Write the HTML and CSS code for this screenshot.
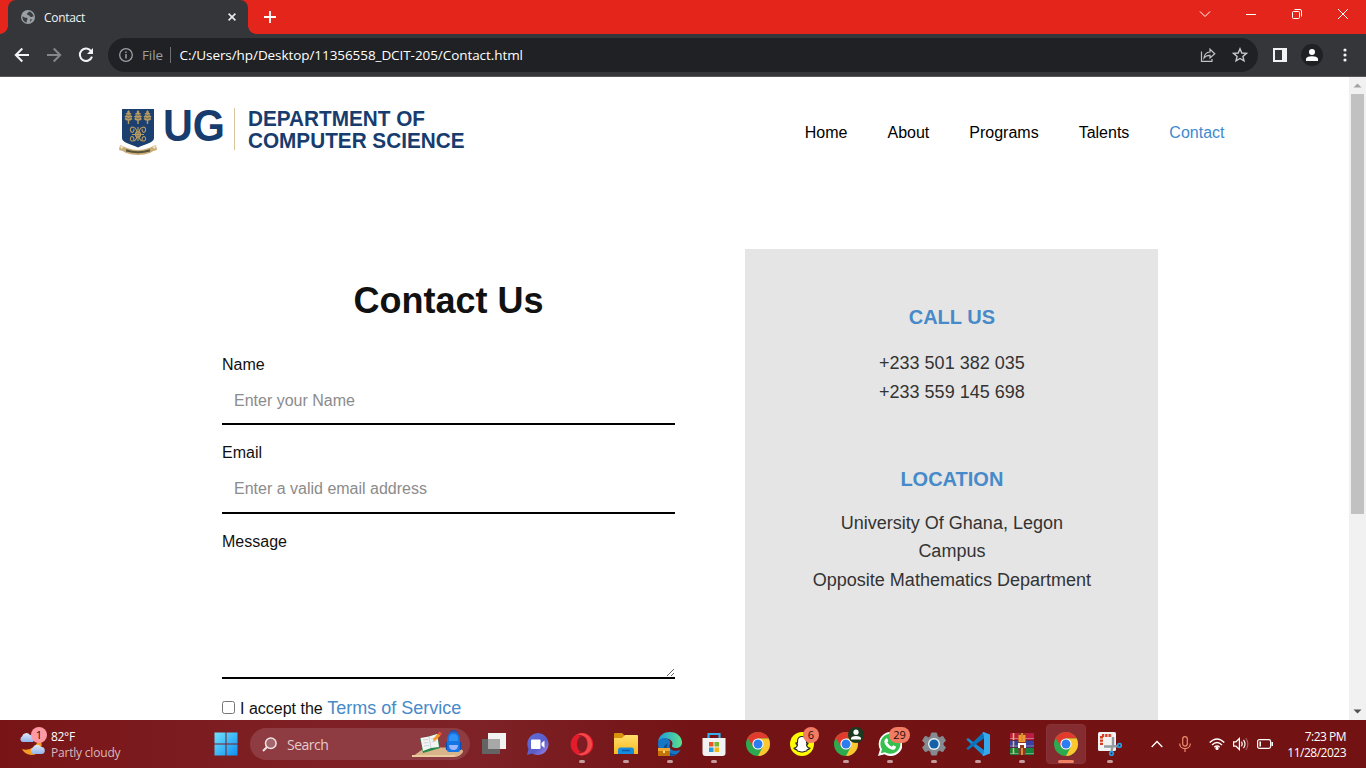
FILE: index.html
```html
<!DOCTYPE html>
<html lang="en">
<head>
<meta charset="utf-8">
<title>Contact</title>
<link rel="stylesheet" href="styles.css">
</head>
<body>
<svg width="0" height="0" class="defs" aria-hidden="true">
  <defs>
    <linearGradient id="gWin" x1="0" y1="0" x2="1" y2="1"><stop offset="0" stop-color="#6fe3ff"/><stop offset="1" stop-color="#0f8ef0"/></linearGradient>
    <linearGradient id="gFolder" x1="0" y1="0" x2="0" y2="1"><stop offset="0" stop-color="#ffdf6b"/><stop offset="1" stop-color="#f9b91f"/></linearGradient>
    <linearGradient id="gEdge" x1="0" y1="0" x2="1" y2="0"><stop offset="0" stop-color="#1a9be0"/><stop offset="1" stop-color="#5de08a"/></linearGradient>
    <linearGradient id="gChat" x1="0" y1="0" x2="1" y2="1"><stop offset="0" stop-color="#5f70d8"/><stop offset=".6" stop-color="#5b5bc9"/><stop offset="1" stop-color="#a98be8"/></linearGradient>
    <linearGradient id="gCloud" x1="0" y1="0" x2="0" y2="1"><stop offset="0" stop-color="#dfeafa"/><stop offset="1" stop-color="#93b3ea"/></linearGradient>
    <symbol id="chrome" viewBox="0 0 24 24">
      <circle cx="12" cy="12" r="12" fill="#2da94f"/>
      <path d="M12 12 1.6 6A12 12 0 0 1 22.4 6L22.4 6.6H12z" fill="#e23b2e"/>
      <path d="M12 6.6H22.7A12 12 0 0 1 12 24L16.8 14.7z" fill="#fdc72f"/>
      <path d="M1.6 6 7.2 14.7 12 6.6z" fill="#e23b2e"/>
      <circle cx="12" cy="12" r="5.6" fill="#fff"/><circle cx="12" cy="12" r="4.5" fill="#2d7df0"/>
    </symbol>
    <symbol id="tree" viewBox="0 0 8 14"><path d="M4 0 5.500 2 5 2.800 7 3.500 6 5.300 8 6.200 6.800 8 8 9 6 10.500 4.700 10.500V14H3.300V10.500L2 10.500 0 9 1.200 8 0 6.200 2 5.300 1 3.500 3 2.800 2.500 2z" fill="#b99b5d"/><path d="M2 4.500 4 5.500 6 4.500M1.500 7.500 4 8.500 6.500 7.500" fill="none" stroke="#1b3f6e" stroke-width=".6"/></symbol>
  </defs>
</svg>

<div class="tabbar">
  <div class="tab">
    <svg class="globe" width="14" height="14" viewBox="0 0 14 14"><circle cx="7" cy="7" r="7" fill="#9aa0a6"/><path d="M1.5 6.2C3 6.5 3.5 7.8 5.2 7.8S6.8 9 6 10 6.2 11.5 5.7 12.6C3 12 1.2 9.5 1.5 6.2zM8 1.5C7.6 2.7 6.2 2.6 6 4S8 4.7 8.5 5.8 10 7.3 11.2 6.8 12.6 7 12.6 6.5C12.3 3.8 10.3 1.9 8 1.5zM9 9.6 11.2 9.3 9.2 12z" fill="#3b3c40"/></svg>
    <span class="tab-title">Contact</span>
    <svg class="tab-close" width="8" height="8" viewBox="0 0 8 8"><path d="M.6.6 7.4 7.4M7.4.6.6 7.4" stroke="#e8eaed" stroke-width="1.6"/></svg>
  </div>
  <svg class="newtab" width="12" height="12" viewBox="0 0 12 12"><path d="M6 0V12M0 6H12" stroke="#fff" stroke-width="1.8"/></svg>
  <div class="window-controls">
    <svg width="12" height="12" viewBox="0 0 12 12"><path d="M1 3.5 6 8.5 11 3.5" fill="none" stroke="#fff"/></svg>
    <svg width="12" height="12" viewBox="0 0 12 12"><path d="M1 6.5H11" stroke="#fff"/></svg>
    <svg width="12" height="12" viewBox="0 0 12 12"><rect x="1.5" y="3.5" width="7" height="7" rx="1" fill="none" stroke="#fff"/><path d="M3.5 1.5H9Q10.5 1.5 10.5 3V8.5" fill="none" stroke="#fff"/></svg>
    <svg width="12" height="12" viewBox="0 0 12 12"><path d="M1 1 11 11M11 1 1 11" stroke="#fff"/></svg>
  </div>
</div>

<div class="toolbar">
  <svg width="16" height="16" viewBox="0 0 16 16"><path d="M15 8H2M8.3 1.5 1.8 8 8.3 14.5" fill="none" stroke="#f1f3f4" stroke-width="2"/></svg>
  <svg width="16" height="16" viewBox="0 0 16 16"><path d="M1 8H14M7.7 1.5 14.2 8 7.7 14.5" fill="none" stroke="#85868a" stroke-width="2"/></svg>
  <svg width="16" height="16" viewBox="0 0 16 16"><path d="M13.2 4.2A6.2 6.2 0 1 0 14 9.6" fill="none" stroke="#f1f3f4" stroke-width="2"/><path d="M15 1V7H9z" fill="#f1f3f4"/></svg>
  <div class="omnibox">
    <svg width="14" height="14" viewBox="0 0 14 14"><circle cx="7" cy="7" r="6.3" fill="none" stroke="#9aa0a6" stroke-width="1.3"/><path d="M7 6V10.4M7 3.4V5" stroke="#9aa0a6" stroke-width="1.5"/></svg>
    <span class="scheme">File</span>
    <span class="divider"></span>
    <span class="url">C:/Users/hp/Desktop/11356558_DCIT-205/Contact.html</span>
    <svg class="share" width="16" height="16" viewBox="0 0 16 16"><path d="M1.5 4.5V14.3H12V12" fill="none" stroke="#bfc1c5" stroke-width="1.2"/><path d="M4 11C4.3 7.5 6.5 5.3 10 5V2.2L14.8 6.8 10 11V8.3C7.5 8.2 5.5 9 4 11z" fill="none" stroke="#bfc1c5" stroke-width="1.2"/></svg>
    <svg class="star" width="16" height="16" viewBox="0 0 16 16"><path d="M8 1.8 9.8 6 14.4 6.4 10.9 9.4 12 13.9 8 11.5 4 13.9 5.1 9.4 1.6 6.4 6.2 6z" fill="none" stroke="#c6c8cc" stroke-width="1.4"/></svg>
  </div>
  <svg class="panel" width="14" height="14" viewBox="0 0 14 14"><path d="M0 0H14V14H0zM2 2V12H9V2z" fill="#f1f3f4" fill-rule="evenodd"/></svg>
  <svg class="profile" width="22" height="22" viewBox="0 0 22 22"><circle cx="11" cy="11" r="11" fill="#202124"/><circle cx="11" cy="8" r="3" fill="#fff"/><path d="M5 17V15C5 12.8 9 12.2 11 12.2S17 12.8 17 15V17z" fill="#fff"/></svg>
  <svg class="dots" width="4" height="14" viewBox="0 0 4 14"><g fill="#f1f3f4"><circle cx="2" cy="2" r="1.6"/><circle cx="2" cy="7" r="1.6"/><circle cx="2" cy="12" r="1.6"/></g></svg>
</div>

<div class="viewport">
  <div class="page">
    <header class="site-header">
      <svg class="logo" width="356" height="64" viewBox="0 -7 356 64">
        <path d="M3 2H35V31C35 36 26 37 19 40.5 12 37 3 36 3 31z" fill="#1b3f6e"/>
        <use href="#tree" x="5" y="3" width="9" height="14"/><use href="#tree" x="14.5" y="3" width="9" height="14"/><use href="#tree" x="24" y="3" width="9" height="14"/>
        <g fill="none" stroke="#b99b5d" stroke-width="1.1"><path d="M19 20V34M13 27.5H25"/><circle cx="19" cy="27.5" r="2.6"/><path d="M18 27C18 18 10 19 11.500 23.500S16 23 14.500 22M20 27C20 18 28 19 26.500 23.500S22 23 23.500 22M18 28C18 36 10 35 11.500 31S16 32 14.500 33M20 28C20 36 28 35 26.500 31S22 32 23.500 33"/></g>
        <path d="M1 38 8 41Q19 45 30 41L37 38 38 43Q34 43.500 31 46 19 50 7 46 4 43.500 0 43z" fill="#c8ac74"/><path d="M7 42.300Q19 46 31 42.300V44.500Q19 48 7 44.500z" fill="#57533f"/>
        <path d="M1 38.500 5 40 2 42zM37 38.500 33 40 36 42z" fill="#f1e4c8"/>
        <text x="44" y="33.500" class="logo-ug" textLength="62" lengthAdjust="spacingAndGlyphs">UG</text>
        <path d="M115.500 1V43" stroke="#d9c49c"/>
        <text x="129" y="18.500" class="logo-name" textLength="177" lengthAdjust="spacingAndGlyphs">DEPARTMENT OF</text>
        <text x="129" y="41" class="logo-name" textLength="216.500" lengthAdjust="spacingAndGlyphs">COMPUTER SCIENCE</text>
      </svg>
      <nav class="site-nav"><a>Home</a><a>About</a><a>Programs</a><a>Talents</a><a class="active">Contact</a></nav>
    </header>
    <main class="contact">
      <form class="contact-form">
        <h1>Contact Us</h1>
        <label for="name">Name</label>
        <input class="field name" id="name" type="text" placeholder="Enter your Name">
        <label for="email">Email</label>
        <input class="field email" id="email" type="email" placeholder="Enter a valid email address">
        <label for="message">Message</label>
        <textarea class="field" id="message"></textarea>
        <div class="terms"><input type="checkbox" id="terms"><span>I accept the <a>Terms of Service</a></span></div>
      </form>
      <aside class="info">
        <h2>CALL US</h2>
        <p>+233 501 382 035<br>+233 559 145 698</p>
        <h2 class="location">LOCATION</h2>
        <p>University Of Ghana, Legon<br>Campus<br>Opposite Mathematics Department</p>
      </aside>
    </main>
  </div>
  <div class="scrollbar">
    <svg width="17" height="17" viewBox="0 0 17 17"><path d="M8.500 6.500 12.500 10.500H4.500z" fill="#a3a3a3"/></svg>
    <div class="thumb"></div>
    <svg class="down" width="17" height="17" viewBox="0 0 17 17"><path d="M8.500 10.500 12.500 6.500H4.500z" fill="#505050"/></svg>
  </div>
</div>

<footer class="taskbar">
  <div class="weather">
    <div class="weather-icon">
      <svg width="26" height="28" viewBox="0 0 26 28"><path d="M20 10Q24 14 22 20 19 26 12 26 5 25 3 20 8 22 13 19T20 10z" fill="#f59a23"/><path d="M3.500 13A3 3 0 0 1 3 7.500 4.500 4.500 0 0 1 11 6 4 4 0 0 1 14 13z" fill="url(#gCloud)"/><path d="M14 25A3.500 3.500 0 0 1 14 18.500 4.500 4.500 0 0 1 22 18 3.500 3.500 0 0 1 22.500 25z" fill="url(#gCloud)"/></svg>
      <span class="weather-badge">1</span>
    </div>
    <div class="weather-text"><div class="temp">82°F</div><div class="sky">Partly cloudy</div></div>
  </div>
  <div class="cell"><svg width="24" height="24" viewBox="0 0 24 24"><path d="M.5.5H11.500V11.500H.5zM12.500.5H23.500V11.500H12.500zM.5 12.500H11.500V23.500H.5zM12.500 12.500H23.500V23.500H12.500z" fill="url(#gWin)"/></svg></div>
  <div class="search">
    <svg width="15" height="15" viewBox="0 0 15 15"><circle cx="8.800" cy="6.200" r="5.300" fill="#a6676c" stroke="#f1e4e5" stroke-width="1.500"/><path d="M5 10 1 14" stroke="#f1e4e5" stroke-width="2"/></svg>
    <span>Search</span>
    <svg class="search-art" width="52" height="28" viewBox="0 0 52 28"><path d="M13 17.500H46Q52 20 51 22 48 27 42 27H0z" fill="#d9b48a"/><path d="M0 25H44L42 27H0z" fill="#eacb9f"/><path d="M8 9 25 4 28 18 11 23z" fill="#24894a"/><path d="M8.500 8 17 6.500 25 4 27 17 19 18 11 21z" fill="#f3f5f5"/><path d="M17 7 19 18M11 10 16 9.500M11.500 13 16.500 12.500M12 16 17 15.500M19 9 24 8M19.500 12 24.500 11" stroke="#c3c8cc" stroke-width=".8"/><path d="M21.500 8.500 26 3.500 28.500 5.500 23.500 10.500 21 11z" fill="#f59a22"/><path d="M26 3.500 27.500 1.500 30 3.500 28.500 5.500z" fill="#ed4b45"/><path d="M38.500 4Q38.500 .8 41.500 .8T44.500 4" fill="none" stroke="#1458bd" stroke-width="1.600"/><path d="M35 11Q35 2 41.500 2T48 11V20Q48 22 46 22H37Q35 22 35 20z" fill="#1675e5"/><path d="M37 9Q37 4 41.500 4T46 9V11H37z" fill="#2f92f7"/><path d="M37 15H46Q46 20 41.500 20T37 15z" fill="#9db6ff"/><path d="M34.500 12V20M48.500 12V20" stroke="#0d4dab" stroke-width="1.200"/></svg>
  </div>
  <div class="cell"><svg width="24" height="24" viewBox="0 0 24 24"><rect x="6" y="1" width="18" height="16" fill="#f2f2f2"/><rect y="7" width="18" height="15" fill="#646464"/><rect x="6" y="7" width="12" height="10" fill="#a8a8a8"/></svg></div>
  <div class="cell"><svg width="24" height="24" viewBox="0 0 24 24"><path d="M12 1A11 11 0 1 1 6 21.500L1 23 2.500 17A11 11 0 0 1 12 1z" fill="url(#gChat)"/><rect x="5" y="7.500" width="9.500" height="9.500" rx="1" fill="#fff"/><path d="M15.500 11 18.500 8.500V16L15.500 13.500z" fill="#fff"/></svg></div>
  <div class="cell running"><svg width="24" height="24" viewBox="0 0 24 24"><ellipse cx="12" cy="12.200" rx="11.300" ry="11.300" fill="#e31b2b"/><path d="M12 1A11.300 11.300 0 0 1 12 23.500Q8.500 23.300 6.500 20.500 9 22 12 21 17 19 17.500 12.200T12 3.500Q9 2.500 6.500 4 8.500 1.200 12 1z" fill="#f04a48"/><path d="M12 3.500Q9 2.500 7.500 4L12 4.500 16 8V17L12 20 7.500 20.500Q9 22 12 21 17.500 19 17.500 12.200T12 3.500z" fill="#b5132a"/><ellipse cx="12" cy="12.200" rx="5" ry="7.900" fill="#7b1d22"/></svg></div>
  <div class="cell running"><svg width="24" height="24" viewBox="0 0 24 24"><path d="M0 2Q0 1 1 1H8L11 4V7H0z" fill="#d6930b"/><path d="M0 6H8L11 3H23Q24 3 24 4V22H0z" fill="url(#gFolder)"/><path d="M4 22V18Q4 15.500 6.500 15.500H17.500Q20 15.500 20 18V22z" fill="#168bdc"/><path d="M8 18.500H16" stroke="#075ba9" stroke-width="1.500"/></svg></div>
  <div class="cell running"><svg width="24" height="24" viewBox="0 0 24 24"><path d="M0 10C1 3 6 0 12 0 19 0 24 5 24 10.500 24 14.500 21 16 18 16 15 16 13.500 15 14 13.500 16 10 12 6.500 8 6.500 4 6.500 1.500 8 0 10z" fill="url(#gEdge)"/><path d="M0 12C0 7 4 5.500 8 6.500 11 7 13 9.500 12 12 10 16 14 20 20 18.500L22.500 18C20 22 17 24 12 24 5 24 0 19 0 12z" fill="#1676c6"/><path d="M10 11C7 15 11 23 18 22 14 25 8 24 6 20S6 13 10 11z" fill="#0d4f94"/><rect y="16" width="12" height="8" fill="#c4730a"/><rect y="16" width="12" height="3" fill="#f0a52e"/><rect x="5" y="18.500" width="2" height="2.500" fill="#ffe06a"/></svg></div>
  <div class="cell running"><svg width="24" height="24" viewBox="0 0 24 24"><path d="M6.500 7V2H17.500V7" fill="none" stroke="#36b1ee" stroke-width="2.200"/><path d="M.5 6H23.500V21Q23.500 24 20.500 24H3.500Q.5 24 .5 21z" fill="#f3f2f2"/><path d="M7 10H11.500V14.500H7z" fill="#eb5428"/><path d="M12.500 10H17V14.500H12.500z" fill="#79b72d"/><path d="M7 15.500H11.500V20H7z" fill="#219be2"/><path d="M12.500 15.500H17V20H12.500z" fill="#f4b717"/></svg></div>
  <div class="cell"><svg width="24" height="24"><use href="#chrome"/></svg></div>
  <div class="cell"><svg width="24" height="24" viewBox="0 0 24 24"><circle cx="12" cy="12" r="12" fill="#fffc00"/><path d="M12 4.500C15 4.500 16.500 6.500 16.500 9V11L18 10.800Q18.500 12 16.500 12.800C17 15 18.500 16 20 16.300 19.500 17.500 18 17.500 17.200 17.800L16.700 19C15 18.700 14 20 12 20S9 18.700 7.300 19L6.800 17.800C6 17.500 4.500 17.500 4 16.300 5.500 16 7 15 7.500 12.800Q5.500 12 6 10.800L7.500 11V9C7.500 6.500 9 4.500 12 4.500z" fill="#fff" stroke="#222" stroke-width="1.100"/></svg><span class="badge">6</span></div>
  <div class="cell running"><svg width="24" height="24"><use href="#chrome"/></svg><svg class="account" width="16" height="16" viewBox="0 0 16 16"><circle cx="8" cy="8" r="8" fill="#1a3b20"/><circle cx="8" cy="5.200" r="2.600" fill="#fff"/><path d="M3 12.500V11Q4 9 8 9T13 11V12.500z" fill="#fff"/></svg></div>
  <div class="cell running"><svg width="24" height="24" viewBox="0 0 24 24"><path d="M0 24 2 17.500A12 12 0 1 1 6.500 22.300z" fill="#fff"/><path d="M2.800 21.300 4 17.200A10 10 0 1 1 7 20.200z" fill="#35c04f"/><path d="M8 6.500C9 6 9.500 6.500 10.300 9L9.300 10.500Q11 13.500 13.800 14.800L15.300 13.200 18 14.500C18 17 16 18 14.500 17.800 10 17 6.500 12.500 6.300 9.500Q6.500 7.300 8 6.500z" fill="#fff"/></svg><span class="badge wide">29</span></div>
  <div class="cell running"><svg width="24" height="24" viewBox="0 0 24 24"><path d="M9.500 1H14.500L15.300 4.500 17.500 5.700 20.800 4.300 23.500 8.700 21 11V13L23.500 15.300 20.800 19.700 17.500 18.300 15.300 19.500 14.500 23H9.500L8.700 19.500 6.500 18.300 3.200 19.700.5 15.300 3 13V11L.5 8.700 3.200 4.300 6.500 5.700 8.700 4.500z" fill="#858b90" stroke="#858b90" stroke-linejoin="round"/><circle cx="12" cy="12" r="6" fill="#e5f0f6"/><circle cx="12" cy="12" r="4.600" fill="#1361a6"/></svg></div>
  <div class="cell running"><svg width="24" height="24" viewBox="0 0 24 24"><path d="M.3 7.500 2 6 18.500 18.500V23.500L17 23.500z" fill="#188bd3"/><path d="M.3 16.500 17 .5 18.500.5V6L2 18z" fill="#0875bc"/><path d="M17.500 0 24 2.500V21.500L17.500 24 16.500 23.500 18 20V4L16.500.5z" fill="#35a9ec"/></svg></div>
  <div class="cell running"><svg width="24" height="24" viewBox="0 0 24 24"><rect y="1" width="24" height="7" rx="1" fill="#bb1c42"/><rect y="8.500" width="24" height="7" rx="1" fill="#3940a0"/><rect y="16" width="24" height="7" rx="1" fill="#16833c"/><path d="M0 6.500H24M0 14H24M0 21.500H24" stroke="#d9d3e1" opacity=".45"/><path d="M3.500 1V8M3.500 9V15M3.500 16V22" stroke="#e5c34d" stroke-width="1.500"/><rect x="8.500" y="1" width="7" height="22" fill="#8e3a20"/><path d="M8.500 3H15.500V10H8.500z" fill="#f39b29"/><path d="M8 11H16V16H14V13H10V16H8z" fill="#fff"/><path d="M12 1V9M12 16V23" stroke="#d98d3d" stroke-width="2"/></svg></div>
  <div class="cell active-app"><svg width="24" height="24"><use href="#chrome"/></svg></div>
  <div class="cell running"><svg width="24" height="24" viewBox="0 0 24 24"><rect width="18" height="19" rx="1.500" fill="#f2f2f2"/><path d="M3.500 13V3.500H14" fill="none" stroke="#d83b1d" stroke-width="3" stroke-dasharray="2.300 1"/><path d="M15 5V13L13.500 19M6 14.500H14L20 14" fill="none" stroke="#949ba1" stroke-width="2.400"/><circle cx="21.500" cy="13.500" r="1.800" fill="none" stroke="#239de4" stroke-width="1.800"/><circle cx="13.500" cy="21.500" r="1.800" fill="none" stroke="#239de4" stroke-width="1.800"/></svg></div>
  <div class="tray">
    <svg width="12" height="8" viewBox="0 0 12 8"><path d="M.7 7 6 1.500 11.300 7" fill="none" stroke="#fff" stroke-width="1.300"/></svg>
    <svg class="mic" width="12" height="16" viewBox="0 0 12 16"><rect x="3.700" y=".6" width="4.600" height="9.500" rx="2.300" fill="none" stroke="#ef8c70" stroke-width="1.200"/><path d="M.7 7.500C.7 14.300 11.300 14.300 11.300 7.500M6 12.800V16" fill="none" stroke="#ef8c70" stroke-width="1.200"/></svg>
    <svg class="wifi" width="16" height="12" viewBox="0 0 16 12"><path d="M.7 4.600Q8-2.500 15.300 4.600M3 7Q8 2.200 13 7M5.300 9.200Q8 6.800 10.700 9.200" fill="none" stroke="#fff" stroke-width="1.400"/><circle cx="8" cy="10.400" r="1.600" fill="#fff"/></svg>
    <svg class="sound" width="16" height="14" viewBox="0 0 16 14"><path d="M.6 4.800H3L6.400 1.500V12.500L3 9.200H.6z" fill="none" stroke="#fff" stroke-width="1.200"/><path d="M8.500 4.700Q10 7 8.500 9.300M10.500 2.800Q13.500 7 10.500 11.200" fill="none" stroke="#fff" stroke-width="1.200"/><path d="M12.800 1Q17 7 12.800 13" fill="none" stroke="#aa6668" stroke-width="1.100"/></svg>
    <svg class="battery" width="16" height="10" viewBox="0 0 16 10"><rect x=".6" y=".6" width="13" height="8.800" rx="1.800" fill="none" stroke="#fff" stroke-width="1.200"/><path d="M3.200 2.500V7.500M15.200 3V7" stroke="#fff" stroke-width="1.500"/></svg>
    <div class="clock"><div class="time">7:23 PM</div><div class="date">11/28/2023</div></div>
  </div>
</footer>
</body>
</html>
```

FILE: styles.css
```css
* { box-sizing: border-box; }
body {
  margin: 0;
  width: 1366px;
  height: 768px;
  overflow: hidden;
  display: flex;
  flex-direction: column;
  font-family: "Liberation Sans", Arial, sans-serif;
  background: #fff;
}
svg { display: block; flex: none; }
.defs { position: absolute; }

/* Browser frame */
.tabbar {
  height: 34px;
  flex: none;
  display: flex;
  padding-left: 8px;
  background: #e3251b;
  font-family: "Open Sans", "Noto Sans", sans-serif;
}
.tab {
  position: relative;
  width: 240px;
  display: flex;
  align-items: center;
  padding: 0 12px 0 13px;
  background: #35363a;
  border-radius: 8px 8px 0 0;
}
.tab::before, .tab::after {
  content: "";
  position: absolute;
  bottom: 0;
  width: 8px;
  height: 8px;
}
.tab::before { left: -8px; background: radial-gradient(circle at 0 0, transparent 7.5px, #35363a 8px); }
.tab::after { right: -8px; background: radial-gradient(circle at 100% 0, transparent 7.5px, #35363a 8px); }
.tab-title { margin-left: 9px; font-size: 12px; color: #f1f3f4; letter-spacing: -.3px; }
.tab-close { margin-left: auto; }
.newtab { margin: 11px 0 0 16px; }
.window-controls { margin: 8px 17px 0 auto; display: flex; gap: 34px; }

.toolbar {
  height: 43px;
  flex: none;
  display: flex;
  align-items: center;
  padding: 0 19px 0 14px;
  background: #35363a;
  border-bottom: 1px solid #5a5558;
  font-family: "Open Sans", "Noto Sans", sans-serif;
}
.toolbar > svg + svg { margin-left: 16px; }
.omnibox {
  width: 1150px;
  height: 34px;
  margin-left: 14px;
  padding: 0 10px 0 11px;
  display: flex;
  align-items: center;
  border-radius: 17px;
  background: #202124;
  font-size: 13.5px;
}
.scheme { margin-left: 9px; color: #9aa0a6; letter-spacing: -.1px; }
.divider { width: 1px; height: 16px; margin: 0 8.5px 0 7px; background: #6c6f73; }
.url { color: #fff; white-space: nowrap; letter-spacing: -.07px; }
.share { margin-left: auto; }
.star { margin-left: 16px; }
.toolbar .panel { margin-left: 15px; }
.toolbar .profile { margin-left: 14px; }
.toolbar .dots { margin-left: auto; }

/* Page */
.viewport { height: 643px; flex: none; display: flex; overflow: hidden; }
.page { width: 1349px; height: 643px; overflow: hidden; }
.site-header {
  height: 110px;
  display: flex;
  align-items: center;
  justify-content: space-between;
  padding: 0 124.5px 0 119px;
}
.logo { margin-top: -1px; overflow: visible; }
.logo-ug { font: bold 43.5px "Liberation Sans", Arial, sans-serif; fill: #173c6d; }
.logo-name { font: bold 22px "Liberation Sans", Arial, sans-serif; fill: #173c6d; }
.site-nav { display: flex; gap: 40px; margin-top: 2px; font-size: 16px; color: #000; }
.site-nav .active { color: #4189cf; }
.contact { display: flex; align-items: flex-start; padding: 62px 0 0 222px; }
.contact-form { width: 453px; padding-top: 31px; }
.contact-form h1 {
  margin: 0 0 34px;
  font-size: 36px;
  line-height: 41px;
  text-align: center;
  color: #111;
}
.contact-form label { display: block; font-size: 16px; line-height: 20px; color: #111; }
.field {
  display: block;
  width: 100%;
  height: 50px;
  margin-bottom: 18px;
  padding: 0 12px;
  border: 0;
  border-bottom: 2px solid #000;
  outline: 0;
  background: none;
  font: 16px "Liberation Sans", Arial, sans-serif;
}
.name { padding-top: 4px; }
.email { height: 51px; padding-top: 2px; }
textarea.field { height: 127px; resize: vertical; }
.field::placeholder { color: #8b8b8b; }
.terms { display: flex; align-items: flex-start; font-size: 16px; line-height: 22px; color: #111; }
.terms input { width: 13px; height: 13px; margin: 4px 5px 0 0; }
.terms a { color: #478ac9; font-size: 18px; }
.info {
  width: 413px;
  height: 600px;
  margin-left: 70.4px;
  padding-top: 54px;
  text-align: center;
  background: #e5e5e5;
}
.info h2 { margin: 0; font-size: 20px; line-height: 28px; color: #478ac9; }
.info p { margin: 18px 0 0; font-size: 18px; line-height: 28.8px; color: #333; }
.info .location { margin-top: 58px; }
.info .location + p { margin-top: 16px; }

.scrollbar { width: 17px; display: flex; flex-direction: column; align-items: center; background: #f1f1f1; }
.thumb { width: 13px; height: 420px; background: #c1c1c1; }
.down { margin-top: auto; }

/* Taskbar */
.taskbar {
  height: 48px;
  flex: none;
  display: flex;
  align-items: center;
  background: linear-gradient(90deg, #781416 0, #7d1e23 240px, #7e2227 480px, #731315 690px, #731212 100%);
  font-family: "Open Sans", "Noto Sans", sans-serif;
  color: #fff;
}
.weather { width: 204px; display: flex; align-items: center; padding-left: 19px; }
.weather-icon { position: relative; top: -1px; }
.weather-badge {
  position: absolute;
  left: 12px;
  top: -2px;
  width: 16px;
  height: 16px;
  border-radius: 50%;
  background: #ff9aa4;
  color: #111;
  font-size: 11px;
  line-height: 16px;
  text-align: center;
}
.weather-text { margin: 2px 0 0 6px; font-size: 12px; line-height: 16px; white-space: nowrap; }
.temp { letter-spacing: -.3px; }
.sky { color: #d9b9bb; letter-spacing: -.2px; }
.search {
  width: 220px;
  height: 32px;
  margin: 0 2px;
  display: flex;
  align-items: center;
  padding: 0 6px 0 12px;
  border-radius: 16px;
  background: #8e3b41;
  font-size: 14px;
  color: #e3cccd;
}
.search span { margin-left: 10px; letter-spacing: -.5px; }
.search-art { margin-left: auto; }
.cell {
  position: relative;
  width: 44px;
  height: 48px;
  flex: none;
  display: flex;
  align-items: center;
  justify-content: center;
}
.running::after {
  content: "";
  position: absolute;
  left: 19px;
  top: 40px;
  width: 6px;
  height: 3px;
  border-radius: 2px;
  background: #c49a9b;
}
.active-app::before {
  content: "";
  position: absolute;
  inset: 4px 2px;
  border: 1px solid #853336;
  border-radius: 4px;
  background: #842c2f;
}
.active-app svg { position: relative; }
.active-app::after {
  content: "";
  position: absolute;
  left: 14px;
  top: 40px;
  width: 16px;
  height: 3px;
  border-radius: 2px;
  background: #f28164;
}
.badge {
  position: absolute;
  left: 25px;
  top: 7px;
  width: 16px;
  height: 16px;
  border-radius: 8px;
  background: #f27c63;
  color: #1c0c0a;
  font-size: 11px;
  line-height: 16px;
  text-align: center;
}
.badge { left: 23px; }
.badge.wide { left: 21px; width: 21px; }
.account { position: absolute; left: 24px; top: 7px; }
.tray { flex: 1; display: flex; align-items: center; padding: 0 20px 0 19px; }
.mic { margin-left: 16px; }
.wifi { margin-left: 18px; }
.sound { margin-left: 8px; }
.battery { margin-left: 8px; }
.clock { margin: 1px 0 0 auto; text-align: right; font-size: 12px; line-height: 16px; letter-spacing: -.5px; white-space: nowrap; }
```
